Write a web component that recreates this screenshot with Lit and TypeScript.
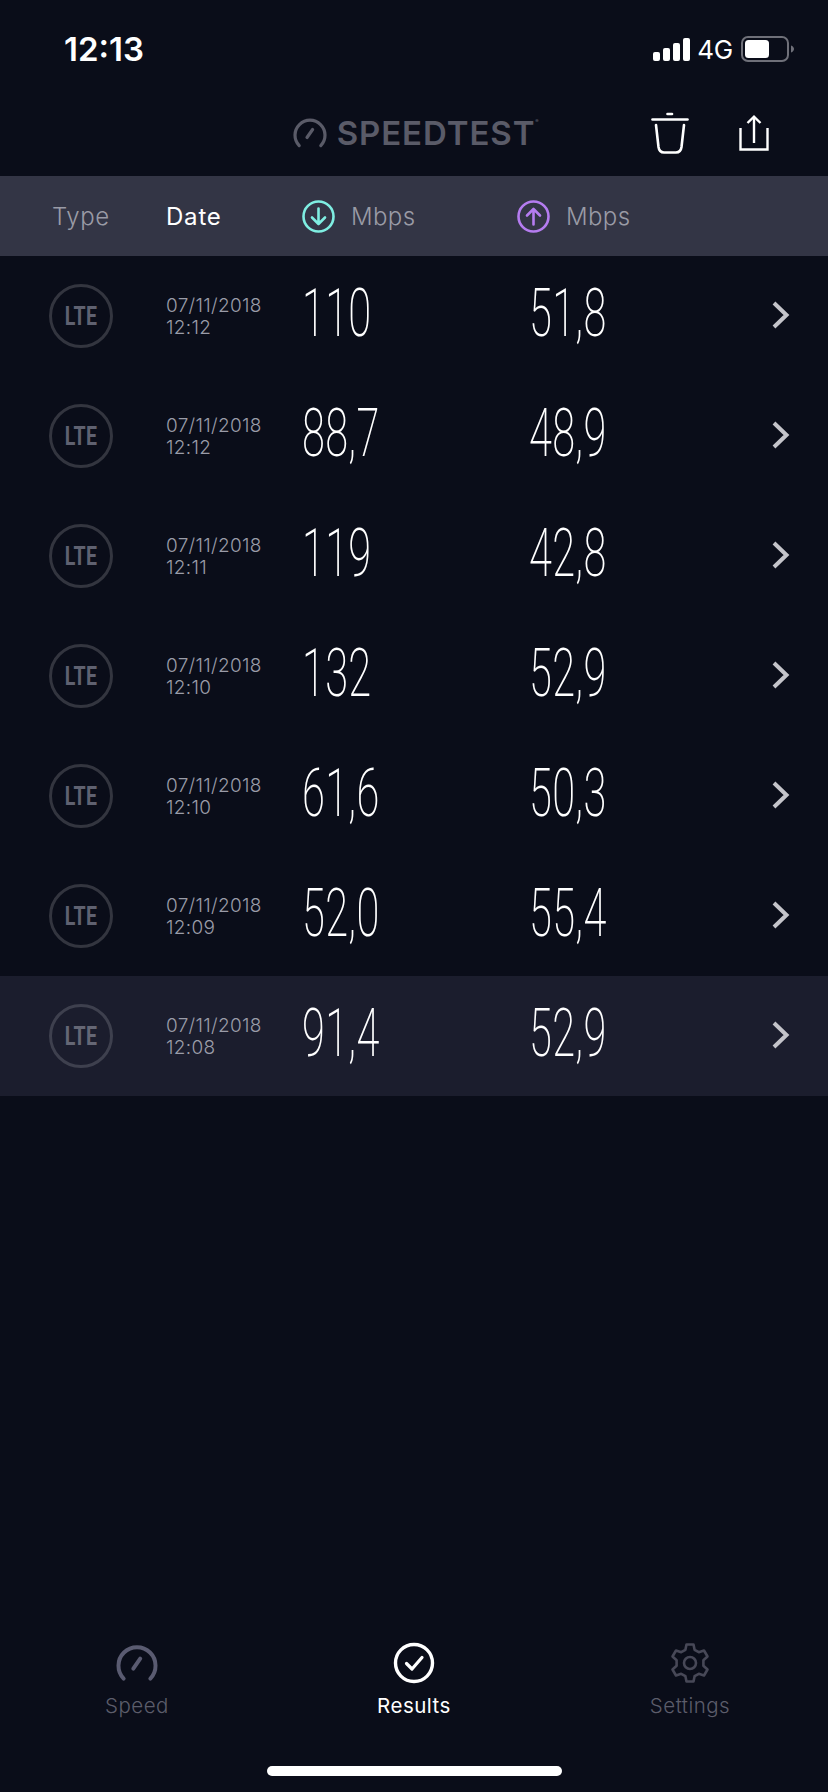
import { LitElement, html, css } from "lit";
import { customElement } from "lit/decorators.js";

const rows = [
  ["12:12", "110", "51,8"],
  ["12:12", "88,7", "48,9"],
  ["12:11", "119", "42,8"],
  ["12:10", "132", "52,9"],
  ["12:10", "61,6", "50,3"],
  ["12:09", "52,0", "55,4"],
  ["12:08", "91,4", "52,9"],
];

const gauge = (cls: string) => html`<svg class=${cls} viewBox="0 0 34 30" fill="none" stroke="currentColor" stroke-linecap="round">
  <path d="M6.2 27.6A15 15 0 1 1 27.8 27.6" stroke-width="3.2"/>
  <path d="M14 19.5L19.6 11.5" stroke-width="3.2"/>
</svg>`;

@customElement("app-root")
export class AppRoot extends LitElement {
  static styles = css`
    :host { display: flex; flex-direction: column; width: 828px; height: 1792px; background: #0a0d19; color: #fff; font-family: Inter, "Liberation Sans", sans-serif; overflow: hidden; }
    .status { height: 94px; flex: none; display: flex; justify-content: space-between; align-items: center; padding: 4px 34px 0 64px; box-sizing: border-box; }
    .time { font-size: 33px; font-weight: 600; letter-spacing: 0; }
    .sys { display: flex; align-items: center; }
    .signal { display: flex; align-items: flex-end; gap: 3px; height: 23px; margin-left: 1px; }
    .signal i { display: block; width: 7px; background: #fff; border-radius: 2px; }
    .s1 { height: 9px; } .s2 { height: 13px; } .s3 { height: 18px; } .s4 { height: 23px; }
    .net { font-size: 26px; font-weight: 400; margin: 0 8px 0 7px; letter-spacing: -0.2px; }
    .batt { display: block; width: 53px; height: 26px; }
    .nav { height: 82px; flex: none; box-sizing: border-box; padding-bottom: 4px; display: grid; grid-template-columns: 1fr auto 1fr; align-items: center; }
    .logo { display: flex; align-items: center; gap: 10px; color: #5a5b68; }
    .logo-icon { width: 34px; height: 30px; display: block; }
    .logo-text { font-size: 33px; font-weight: 600; letter-spacing: 0.9px; position: relative; line-height: 1; }
    .logo-text sup { position: absolute; left: 100%; top: 2px; font-size: 5px; line-height: 1; }
    .actions { display: flex; justify-content: flex-end; align-items: center; gap: 50px; padding-right: 59px; }
    .actions svg { display: block; }
    .trash { width: 38px; height: 42px; }
    .share { width: 30px; height: 36px; }
    .thead { height: 80px; flex: none; background: #333545; display: flex; align-items: center; font-size: 24px; font-weight: 300; color: #9a9ba6; }
    .c-type { width: 166px; flex: none; box-sizing: border-box; padding-left: 52px; letter-spacing: .6px; }
    .c-date { width: 136px; flex: none; letter-spacing: .8px; }
    .c-down { width: 215px; flex: none; display: flex; align-items: center; gap: 16px; letter-spacing: .4px; }
    .c-up { display: flex; align-items: center; gap: 16px; letter-spacing: .4px; }
    .active { color: #fff; font-weight: 400; }
    .thead svg { width: 33px; height: 33px; display: block; }
    .row { height: 120px; display: flex; align-items: center; }
    .row.hl { background: #1b1d2d; }
    .type { width: 166px; flex: none; box-sizing: border-box; padding-left: 49px; }
    .lte { width: 64px; height: 64px; box-sizing: border-box; border: 3px solid #33353f; border-radius: 50%; display: flex; align-items: center; justify-content: center; color: #5f6170; font-family: Roboto, sans-serif; font-weight: 700; font-size: 25px; }
    .hl .lte { border-color: #3e404e; color: #656775; }
    .lte span { display: block; transform: scaleX(.78); letter-spacing: .6px; }
    .date { width: 136px; flex: none; font-size: 19px; font-weight: 300; line-height: 22px; color: #9a9ca8; letter-spacing: 0.3px; margin-top: 2px; }
    .num { font-family: Roboto, sans-serif; font-weight: 200; font-size: 67px; line-height: 1; letter-spacing: .5px; transform: scaleX(.62); transform-origin: left center; margin-top: -6px; }
    .d { width: 227px; flex: none; }
    .u { flex: 1; }
    .chev { width: 18px; height: 28px; display: block; margin: -3px 38px 0 0; }
    .spacer { flex: 1; }
    .footer { flex: none; height: 150px; box-sizing: border-box; padding-bottom: 16px; display: flex; flex-direction: column; }
    .tabs { display: grid; grid-template-columns: 274px 280px 272px; }
    .tab { display: flex; flex-direction: column; align-items: center; font-size: 20.5px; font-weight: 300; letter-spacing: .5px; color: #5c5d6b; line-height: 24px; }
    .tab svg { display: block; width: 42px; height: 42px; margin-bottom: 10px; }
    .t1 svg { color: #5a5b71; }
    .t2 { color: #fff; font-weight: 400; }
    .t3 svg { color: #474857; }
    .homebar { margin: auto 0 0 267px; width: 295px; height: 10px; border-radius: 5px; background: #fff; }
  `;

  render() {
    return html`
      <div class="status">
        <div class="time">12:13</div>
        <div class="sys">
          <div class="signal"><i class="s1"></i><i class="s2"></i><i class="s3"></i><i class="s4"></i></div>
          <div class="net">4G</div>
          <svg class="batt" viewBox="0 0 53 26">
            <rect x="1" y="1" width="46" height="24" rx="6" fill="none" stroke="#6f7079" stroke-width="2"/>
            <rect x="4" y="4" width="24" height="18" rx="3.5" fill="#fff"/>
            <path d="M50 9.5c1.8.6 3 2 3 3.5s-1.2 2.9-3 3.5z" fill="#6f7079"/>
          </svg>
        </div>
      </div>
      <div class="nav">
        <div></div>
        <div class="logo">${gauge("logo-icon")}<div class="logo-text">SPEEDTEST<sup>®</sup></div></div>
        <div class="actions">
          <svg class="trash" viewBox="0 0 38 42" fill="none" stroke="#fff" stroke-width="2.6" stroke-linecap="round" stroke-linejoin="round">
            <path d="M1.5 7.5H36.5" /><path d="M16.5 2H21" />
            <path d="M5 13L7.5 35C8 38.5 10 40.5 13 40.5H25C28 40.5 30 38.5 30.5 35L33 13" />
          </svg>
          <svg class="share" viewBox="0 0 30 36" fill="none" stroke="#fff" stroke-width="2.4">
            <path d="M1.5 13V34.5H28.5V13" /><path d="M15 28V2" /><path d="M8.5 8L15 1.7L21.5 8" />
          </svg>
        </div>
      </div>
      <div class="thead">
        <div class="c-type">Type</div>
        <div class="c-date active">Date</div>
        <div class="c-down">
          <svg viewBox="0 0 33 33" fill="none" stroke="#7feee2" stroke-width="2.6" stroke-linecap="round" stroke-linejoin="round"><circle cx="16.5" cy="16.5" r="15"/><path d="M16.5 8.5V24M10 17.5L16.5 24L23 17.5"/></svg>
          <span>Mbps</span>
        </div>
        <div class="c-up">
          <svg viewBox="0 0 33 33" fill="none" stroke="#b57cf0" stroke-width="2.6" stroke-linecap="round" stroke-linejoin="round"><circle cx="16.5" cy="16.5" r="15"/><path d="M16.5 24.5V9M10 15.5L16.5 9L23 15.5"/></svg>
          <span>Mbps</span>
        </div>
      </div>
      ${rows.map((r, i) => html`
        <div class="row ${i === 6 ? "hl" : ""}">
          <div class="type"><div class="lte"><span>LTE</span></div></div>
          <div class="date">07/11/2018<br />${r[0]}</div>
          <div class="num d">${r[1]}</div>
          <div class="num u">${r[2]}</div>
          <svg class="chev" viewBox="0 0 18 28" fill="none" stroke="#c4c4ca" stroke-width="4"><path d="M2 2L14.5 14L2 26"/></svg>
        </div>`)}
      <div class="spacer"></div>
      <div class="footer">
        <div class="tabs">
          <div class="tab t1">${gauge("")}<span>Speed</span></div>
          <div class="tab t2">
            <svg viewBox="0 0 42 42" fill="none" stroke="#fff" stroke-linecap="round" stroke-linejoin="round"><circle cx="21" cy="21" r="18.5" stroke-width="3.4"/><path d="M13.5 21.5L19 27L29 15.5" stroke-width="3.2"/></svg>
            <span>Results</span>
          </div>
          <div class="tab t3">
            <svg viewBox="0 0 42 42" fill="none" stroke="currentColor" stroke-width="2.6" stroke-linejoin="round">
              <path d="M17.5 2.5H24.5L25.6 7.8L29.8 10.2L35 8.5L38.5 14.5L34.4 18.2V23.8L38.5 27.5L35 33.5L29.8 31.8L25.6 34.2L24.5 39.5H17.5L16.4 34.2L12.2 31.8L7 33.5L3.5 27.5L7.6 23.8V18.2L3.5 14.5L7 8.5L12.2 10.2L16.4 7.8Z"/>
              <circle cx="21" cy="21" r="6"/>
            </svg>
            <span>Settings</span>
          </div>
        </div>
        <div class="homebar"></div>
      </div>
    `;
  }
}
